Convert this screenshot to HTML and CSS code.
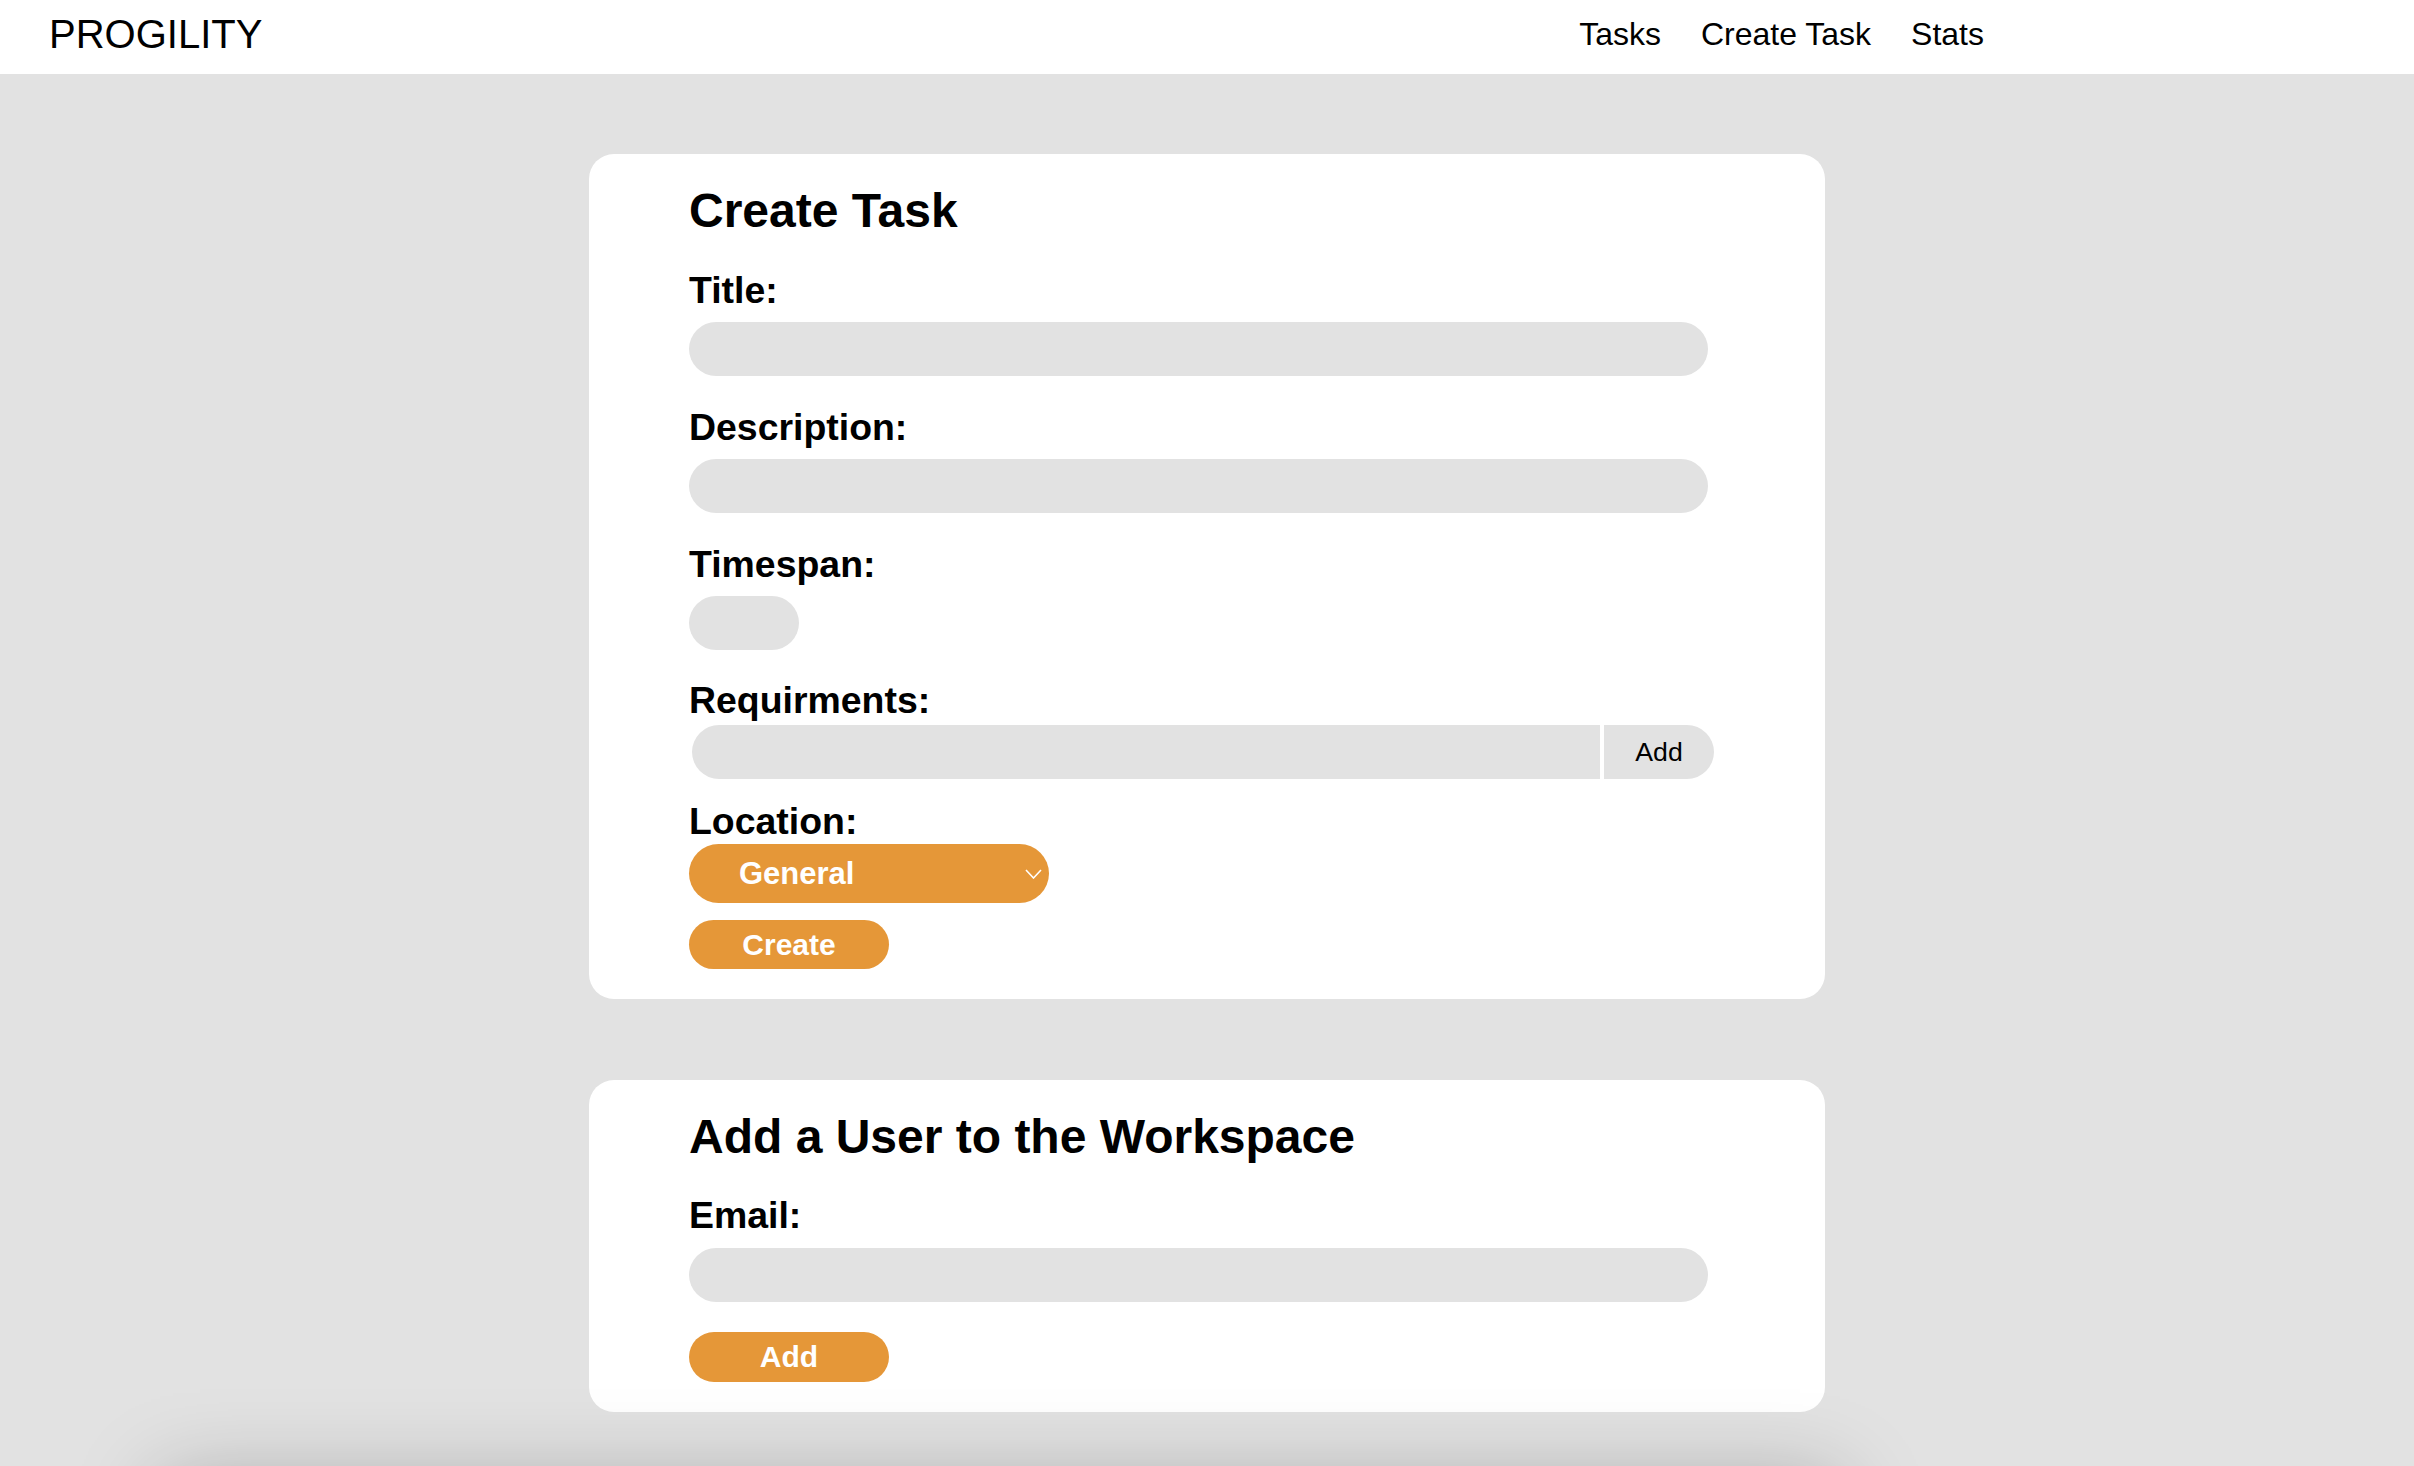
FILE: index.html
```html
<!DOCTYPE html>
<html lang="en">
<head>
<meta charset="utf-8">
<title>Progility</title>
<link rel="stylesheet" href="styles.css">
</head>
<body>
<nav class="topbar">
  <div class="brand">PROGILITY</div>
  <div class="nav-links">
    <a class="nav-link" href="#">Tasks</a>
    <a class="nav-link" href="#">Create Task</a>
    <a class="nav-link" href="#">Stats</a>
  </div>
</nav>
<main class="page">
  <section class="card card-task">
    <h2 class="card-title">Create Task</h2>
    <label class="field-label first">Title:</label>
    <input class="text-input wide" type="text">
    <label class="field-label">Description:</label>
    <input class="text-input wide" type="text">
    <label class="field-label">Timespan:</label>
    <input class="text-input short" type="text">
    <label class="field-label req-label">Requirments:</label>
    <div class="req-row">
      <input class="text-input req-input" type="text">
      <button class="req-add" type="button">Add</button>
    </div>
    <label class="field-label loc-label">Location:</label>
    <div class="select-wrap">
      <select class="loc-select">
        <option>General</option>
      </select>
      <svg class="chev" width="17" height="10" viewBox="0 0 17 10"><path d="M1 1 L8.5 9 L16 1" fill="none" stroke="#fff" stroke-width="1.6"/></svg>
    </div>
    <button class="orange-btn create-btn" type="button">Create</button>
  </section>
  <section class="card card-user">
    <h2 class="card-title">Add a User to the Workspace</h2>
    <label class="field-label first email-label">Email:</label>
    <input class="text-input wide email-input" type="text">
    <button class="orange-btn add-btn" type="button">Add</button>
  </section>
  <div class="below-shadow"></div>
</main>
</body>
</html>
```

FILE: styles.css
```css
html, body {
  margin: 0;
  padding: 0;
}
body {
  background: #e2e2e2;
  font-family: "Liberation Sans", Arial, Helvetica, sans-serif;
  color: #000;
}
.topbar {
  height: 74px;
  box-sizing: border-box;
  background: #fff;
  display: flex;
  align-items: flex-start;
  padding-left: 49px;
}
.brand {
  font-size: 40px;
  line-height: 40px;
  margin-top: 14px;
}
.nav-links {
  margin-left: auto;
  margin-right: 430px;
  margin-top: 19px;
  display: flex;
  gap: 40px;
}
.nav-link {
  font-size: 32px;
  line-height: 31px;
  color: #000;
  text-decoration: none;
}
.page {
  padding-top: 80px;
  overflow: hidden;
}
.card {
  width: 1236px;
  margin: 0 auto;
  box-sizing: border-box;
  background: #fff;
  border-radius: 25px;
  padding: 33px 100px 30px;
}
.card-user {
  margin-top: 81px;
}
.card-title {
  margin: 0;
  font-size: 48px;
  line-height: 48px;
  font-weight: bold;
}
.field-label {
  display: block;
  font-size: 37.44px;
  line-height: 37px;
  font-weight: bold;
  margin-top: 33px;
}
.field-label.first {
  margin-top: 37px;
}
.field-label.email-label {
  margin-top: 36px;
}
.text-input {
  display: block;
  box-sizing: border-box;
  height: 54px;
  border: none;
  outline: none;
  background: #e2e2e2;
  border-radius: 27px;
  margin: 13px 0 0;
  padding: 0 20px;
  font-family: inherit;
  font-size: 26px;
}
.email-input {
  margin-top: 14px;
}
.wide {
  width: 1019px;
}
.short {
  width: 110px;
}
.req-label {
  margin-top: 32px;
}
.req-row {
  display: flex;
  gap: 4px;
  margin: 6px 0 0 3px;
}
.req-input {
  margin: 0;
  width: 908px;
  border-radius: 27px 0 0 27px;
}
.req-add {
  width: 110px;
  height: 54px;
  border: none;
  background: #e2e2e2;
  border-radius: 0 27px 27px 0;
  font-family: "Liberation Sans", Arial, sans-serif;
  font-size: 26.67px;
  color: #000;
  padding: 0;
}
.loc-label {
  margin-top: 24px;
}
.select-wrap {
  position: relative;
  width: 360px;
  height: 59px;
  margin-top: 4px;
}
.loc-select {
  appearance: none;
  -webkit-appearance: none;
  width: 360px;
  height: 59px;
  border: none;
  outline: none;
  border-radius: 30px;
  background: #e59738;
  color: #fff;
  font-family: "Liberation Sans", Arial, sans-serif;
  font-weight: bold;
  font-size: 31px;
  padding: 0 0 0 50px;
  margin: 0;
}
.chev {
  position: absolute;
  right: 7px;
  top: 25px;
  pointer-events: none;
}
.orange-btn {
  display: block;
  width: 200px;
  border: none;
  background: #e59738;
  color: #fff;
  font-family: "Liberation Sans", Arial, sans-serif;
  font-weight: bold;
  font-size: 30px;
  padding: 0;
  border-radius: 25px;
}
.create-btn {
  height: 49px;
  margin-top: 17px;
}
.add-btn {
  height: 50px;
  margin-top: 30px;
}
.below-shadow {
  margin: 68px 0 0 160px;
  width: 1680px;
  height: 300px;
  background: #e2e2e2;
  box-shadow: 0 0 80px rgba(0, 0, 0, 0.25);
}
```
